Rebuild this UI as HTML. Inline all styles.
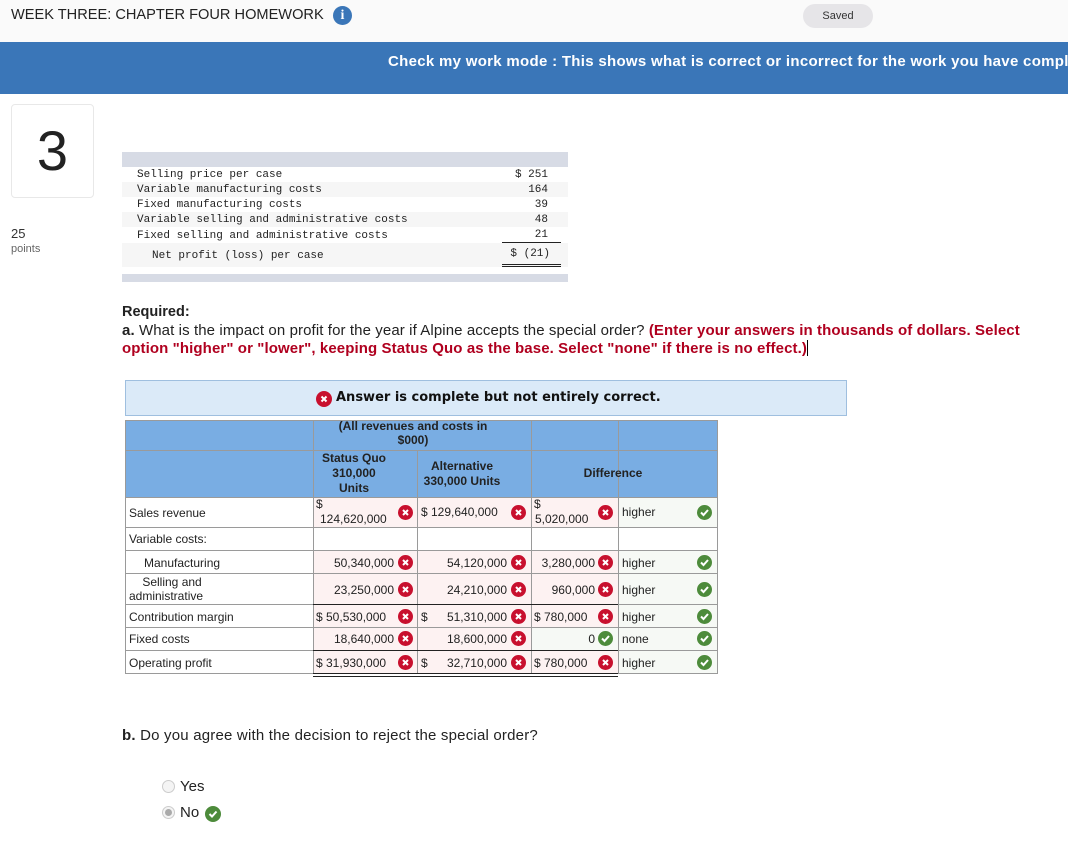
<!DOCTYPE html>
<html><head><meta charset="utf-8"><style>
*{margin:0;padding:0;box-sizing:border-box}
body{width:1068px;height:849px;background:#fff;font-family:"Liberation Sans",Arial,sans-serif;position:relative;overflow:hidden;color:#222}
.a{position:absolute;white-space:nowrap}
.t{position:absolute;font-size:12px;white-space:nowrap;color:#222}
.x,.k{position:absolute;width:15px;height:15px;border-radius:50%;}
.x{background:#c8102e}
.k{background:#4d8b3b}
.x svg,.k svg{position:absolute;left:0;top:0}
.mono{font-family:"Liberation Mono",monospace;font-size:11px;color:#222}
</style></head><body>
<div class="a" style="left:0;top:0;width:1068px;height:42px;background:#fafafa"></div>
<div class="a" style="left:11px;top:7px;font-size:14.6px;color:#222">WEEK THREE: CHAPTER FOUR HOMEWORK</div>
<div class="a" style="left:333px;top:6px;width:19px;height:19px;border-radius:50%;background:#3a76b8;color:#fff;font:bold 14px 'Liberation Serif',serif;text-align:center;line-height:19px">i</div>
<div class="a" style="left:803px;top:4px;width:70px;height:24px;border-radius:12px;background:#e6e5e8;font-size:11px;text-align:center;line-height:24px;color:#333">Saved</div>
<div class="a" style="left:0;top:42px;width:1068px;height:52px;background:#3a76b8;overflow:hidden">
<div class="a" style="left:388px;top:11px;font-size:15px;letter-spacing:0.3px;font-weight:bold;color:#fff">Check my work mode : This shows what is correct or incorrect for the work you have completed so far.</div>
</div>
<div class="a" style="left:11px;top:104px;width:83px;height:94px;border:1px solid #e8e8e8;border-radius:4px;font-size:56px;text-align:center;line-height:92px;color:#222">3</div>
<div class="a" style="left:11px;top:226px;font-size:13px;color:#333">25</div>
<div class="a" style="left:11px;top:243px;font-size:11px;color:#666">points</div>
<div class="a" style="left:122px;top:152px;width:446px;height:15px;background:#d7dbe5"></div>
<div class="a" style="left:122px;top:182px;width:446px;height:15px;background:#f6f6f6"></div>
<div class="a" style="left:122px;top:212px;width:446px;height:15px;background:#f6f6f6"></div>
<div class="a" style="left:122px;top:243px;width:446px;height:24px;background:#f6f6f6"></div>
<div class="a" style="left:122px;top:274px;width:446px;height:8px;background:#d7dbe5"></div>
<div class="a mono" style="left:137px;top:169px">Selling price per case</div>
<div class="a mono" style="left:137px;top:184px">Variable manufacturing costs</div>
<div class="a mono" style="left:137px;top:199px">Fixed manufacturing costs</div>
<div class="a mono" style="left:137px;top:214px">Variable selling and administrative costs</div>
<div class="a mono" style="left:137px;top:230px">Fixed selling and administrative costs</div>
<div class="a mono" style="left:152px;top:250px">Net profit (loss) per case</div>
<div class="a mono" style="left:500px;top:169px;width:48px;text-align:right">$ 251</div>
<div class="a mono" style="left:500px;top:184px;width:48px;text-align:right">164</div>
<div class="a mono" style="left:500px;top:199px;width:48px;text-align:right">39</div>
<div class="a mono" style="left:500px;top:214px;width:48px;text-align:right">48</div>
<div class="a mono" style="left:500px;top:229px;width:48px;text-align:right">21</div>
<div class="a mono" style="left:500px;top:248px;width:50px;text-align:right">$ (21)</div>
<div class="a" style="top:242px;width:59px;height:1px;background:#222;left:502px"></div>
<div class="a" style="left:502px;top:264px;width:59px;height:3px;border-top:1px solid #222;border-bottom:1px solid #222"></div>
<div class="a" style="left:122px;top:304px;font-size:14.5px;font-weight:bold;color:#222">Required:</div>
<div class="a" style="left:122px;top:322px;font-size:15px;letter-spacing:0.1px;line-height:18px;white-space:normal;width:925px"><b>a.</b> What is the impact on profit for the year if Alpine accepts the special order? <b style="color:#b0001f">(Enter your answers in thousands of dollars. Select option "higher" or "lower", keeping Status Quo as the base. Select "none" if there is no effect.)</b><span style="display:inline-block;width:1px;height:16px;background:#000;vertical-align:-3px"></span></div>
<div class="a" style="left:125px;top:380px;width:722px;height:36px;background:#dbeaf8;border:1px solid #9fbfdf"></div>
<div class="x" style="left:316px;top:391px;width:16px;height:16px"><svg width="16" height="16"><path d="M5.5 5.5L10.5 10.5M10.5 5.5L5.5 10.5" stroke="#fff" stroke-width="2"/></svg></div>
<div class="a" style="left:336px;top:390px;font-size:13px;font-weight:bold;font-family:'DejaVu Sans',sans-serif;color:#111">Answer is complete but not entirely correct.</div>
<div class="a" style="left:125px;top:420px;width:593px;height:77px;background:#79ade3"></div>
<div class="a" style="left:313px;top:497px;width:305px;height:30px;background:#fdf2f2"></div>
<div class="a" style="left:313px;top:550px;width:305px;height:123px;background:#fdf2f2"></div>
<div class="a" style="left:531px;top:627px;width:87px;height:23px;background:#f6f9f5"></div>
<div class="a" style="left:618px;top:497px;width:100px;height:30px;background:#f6f9f5"></div>
<div class="a" style="left:618px;top:550px;width:100px;height:123px;background:#f6f9f5"></div>
<svg class="a" style="left:0;top:0" width="1068" height="849">
<g stroke="#9a9a9a" stroke-width="1" fill="none">
<rect x="125.5" y="420.5" width="592" height="253"/>
<line x1="125" y1="450.5" x2="718" y2="450.5"/>
<line x1="125" y1="497.5" x2="718" y2="497.5"/>
<line x1="125" y1="527.5" x2="718" y2="527.5"/>
<line x1="125" y1="550.5" x2="718" y2="550.5"/>
<line x1="125" y1="573.5" x2="718" y2="573.5"/>
<line x1="125" y1="627.5" x2="718" y2="627.5"/>
<line x1="125" y1="650.5" x2="718" y2="650.5"/>
<line x1="313.5" y1="420" x2="313.5" y2="673"/>
<line x1="417.5" y1="450" x2="417.5" y2="673"/>
<line x1="531.5" y1="420" x2="531.5" y2="673"/>
<line x1="618.5" y1="420" x2="618.5" y2="673"/>
<line x1="125" y1="604.5" x2="313" y2="604.5"/>
<line x1="618" y1="604.5" x2="718" y2="604.5"/>
</g>
<g stroke="#222" stroke-width="1">
<line x1="313" y1="604.5" x2="618" y2="604.5"/>
<line x1="313" y1="650.5" x2="618" y2="650.5"/>
<line x1="313" y1="673.5" x2="618" y2="673.5"/>
<line x1="313" y1="676.5" x2="618" y2="676.5"/>
</g>
</svg>
<div class="t" style="left:313px;top:419px;width:200px;text-align:center;font-weight:bold;color:#222;line-height:14px">(All revenues and costs in<br>$000)</div>
<div class="t" style="left:313px;top:451px;width:82px;text-align:center;font-weight:bold;line-height:15px">Status Quo<br>310,000<br>Units</div>
<div class="t" style="left:417px;top:459px;width:90px;text-align:center;font-weight:bold;line-height:15px">Alternative<br>330,000 Units</div>
<div class="t" style="left:531px;top:466px;width:164px;text-align:center;font-weight:bold">Difference</div>
<div class="t" style="left:129px;top:506px">Sales revenue</div>
<div class="t" style="left:129px;top:532px">Variable costs:</div>
<div class="t" style="left:144px;top:556px">Manufacturing</div>
<div class="t" style="left:129px;top:575px;line-height:14px;white-space:normal;width:100px">&nbsp;&nbsp;&nbsp;&nbsp;Selling and administrative</div>
<div class="t" style="left:129px;top:610px">Contribution margin</div>
<div class="t" style="left:129px;top:632px">Fixed costs</div>
<div class="t" style="left:129px;top:656px">Operating profit</div>
<div class="t" style="left:316px;top:497px">$</div>
<div class="t" style="left:320px;top:512px">124,620,000</div>
<div class="t" style="left:421px;top:505px">$ 129,640,000</div>
<div class="t" style="left:534px;top:497px">$</div>
<div class="t" style="left:535px;top:512px">5,020,000</div>
<div class="t" style="left:622px;top:505px">higher</div>
<div class="t" style="left:313px;top:556px;width:81px;text-align:right">50,340,000</div>
<div class="t" style="left:417px;top:556px;width:90px;text-align:right">54,120,000</div>
<div class="t" style="left:531px;top:556px;width:64px;text-align:right">3,280,000</div>
<div class="t" style="left:622px;top:556px">higher</div>
<div class="t" style="left:313px;top:583px;width:81px;text-align:right">23,250,000</div>
<div class="t" style="left:417px;top:583px;width:90px;text-align:right">24,210,000</div>
<div class="t" style="left:531px;top:583px;width:64px;text-align:right">960,000</div>
<div class="t" style="left:622px;top:583px">higher</div>
<div class="t" style="left:316px;top:610px">$ 50,530,000</div>
<div class="t" style="left:421px;top:610px">$</div>
<div class="t" style="left:417px;top:610px;width:90px;text-align:right">51,310,000</div>
<div class="t" style="left:534px;top:610px">$ 780,000</div>
<div class="t" style="left:622px;top:610px">higher</div>
<div class="t" style="left:313px;top:632px;width:81px;text-align:right">18,640,000</div>
<div class="t" style="left:417px;top:632px;width:90px;text-align:right">18,600,000</div>
<div class="t" style="left:531px;top:632px;width:64px;text-align:right">0</div>
<div class="t" style="left:622px;top:632px">none</div>
<div class="t" style="left:316px;top:656px">$ 31,930,000</div>
<div class="t" style="left:421px;top:656px">$</div>
<div class="t" style="left:417px;top:656px;width:90px;text-align:right">32,710,000</div>
<div class="t" style="left:534px;top:656px">$ 780,000</div>
<div class="t" style="left:622px;top:656px">higher</div>
<div class="x" style="left:398px;top:505px"><svg width="15" height="15"><path d="M5 5L10 10M10 5L5 10" stroke="#fff" stroke-width="2"/></svg></div>
<div class="x" style="left:511px;top:505px"><svg width="15" height="15"><path d="M5 5L10 10M10 5L5 10" stroke="#fff" stroke-width="2"/></svg></div>
<div class="x" style="left:598px;top:505px"><svg width="15" height="15"><path d="M5 5L10 10M10 5L5 10" stroke="#fff" stroke-width="2"/></svg></div>
<div class="x" style="left:398px;top:555px"><svg width="15" height="15"><path d="M5 5L10 10M10 5L5 10" stroke="#fff" stroke-width="2"/></svg></div>
<div class="x" style="left:511px;top:555px"><svg width="15" height="15"><path d="M5 5L10 10M10 5L5 10" stroke="#fff" stroke-width="2"/></svg></div>
<div class="x" style="left:598px;top:555px"><svg width="15" height="15"><path d="M5 5L10 10M10 5L5 10" stroke="#fff" stroke-width="2"/></svg></div>
<div class="x" style="left:398px;top:582px"><svg width="15" height="15"><path d="M5 5L10 10M10 5L5 10" stroke="#fff" stroke-width="2"/></svg></div>
<div class="x" style="left:511px;top:582px"><svg width="15" height="15"><path d="M5 5L10 10M10 5L5 10" stroke="#fff" stroke-width="2"/></svg></div>
<div class="x" style="left:598px;top:582px"><svg width="15" height="15"><path d="M5 5L10 10M10 5L5 10" stroke="#fff" stroke-width="2"/></svg></div>
<div class="x" style="left:398px;top:609px"><svg width="15" height="15"><path d="M5 5L10 10M10 5L5 10" stroke="#fff" stroke-width="2"/></svg></div>
<div class="x" style="left:511px;top:609px"><svg width="15" height="15"><path d="M5 5L10 10M10 5L5 10" stroke="#fff" stroke-width="2"/></svg></div>
<div class="x" style="left:598px;top:609px"><svg width="15" height="15"><path d="M5 5L10 10M10 5L5 10" stroke="#fff" stroke-width="2"/></svg></div>
<div class="x" style="left:398px;top:631px"><svg width="15" height="15"><path d="M5 5L10 10M10 5L5 10" stroke="#fff" stroke-width="2"/></svg></div>
<div class="x" style="left:511px;top:631px"><svg width="15" height="15"><path d="M5 5L10 10M10 5L5 10" stroke="#fff" stroke-width="2"/></svg></div>
<div class="k" style="left:598px;top:631px"><svg width="15" height="15"><path d="M4 7.5L6.5 10L11 5" stroke="#fff" stroke-width="2" fill="none"/></svg></div>
<div class="x" style="left:398px;top:655px"><svg width="15" height="15"><path d="M5 5L10 10M10 5L5 10" stroke="#fff" stroke-width="2"/></svg></div>
<div class="x" style="left:511px;top:655px"><svg width="15" height="15"><path d="M5 5L10 10M10 5L5 10" stroke="#fff" stroke-width="2"/></svg></div>
<div class="x" style="left:598px;top:655px"><svg width="15" height="15"><path d="M5 5L10 10M10 5L5 10" stroke="#fff" stroke-width="2"/></svg></div>
<div class="k" style="left:697px;top:505px"><svg width="15" height="15"><path d="M4 7.5L6.5 10L11 5" stroke="#fff" stroke-width="2" fill="none"/></svg></div>
<div class="k" style="left:697px;top:555px"><svg width="15" height="15"><path d="M4 7.5L6.5 10L11 5" stroke="#fff" stroke-width="2" fill="none"/></svg></div>
<div class="k" style="left:697px;top:582px"><svg width="15" height="15"><path d="M4 7.5L6.5 10L11 5" stroke="#fff" stroke-width="2" fill="none"/></svg></div>
<div class="k" style="left:697px;top:609px"><svg width="15" height="15"><path d="M4 7.5L6.5 10L11 5" stroke="#fff" stroke-width="2" fill="none"/></svg></div>
<div class="k" style="left:697px;top:631px"><svg width="15" height="15"><path d="M4 7.5L6.5 10L11 5" stroke="#fff" stroke-width="2" fill="none"/></svg></div>
<div class="k" style="left:697px;top:655px"><svg width="15" height="15"><path d="M4 7.5L6.5 10L11 5" stroke="#fff" stroke-width="2" fill="none"/></svg></div>
<div class="a" style="left:122px;top:727px;font-size:15px;letter-spacing:0.2px;color:#222"><b>b.</b> Do you agree with the decision to reject the special order?</div>
<div class="a" style="left:162px;top:780px;width:13px;height:13px;border-radius:50%;border:1px solid #ccc;background:#f4f4f4"></div>
<div class="a" style="left:180px;top:778px;font-size:15px">Yes</div>
<div class="a" style="left:162px;top:806px;width:13px;height:13px;border-radius:50%;border:1px solid #ccc;background:#f4f4f4"></div>
<div class="a" style="left:165px;top:809px;width:7px;height:7px;border-radius:50%;background:#aaa"></div>
<div class="a" style="left:180px;top:804px;font-size:15px">No</div>
<div class="k" style="left:205px;top:806px;width:16px;height:16px"><svg width="16" height="16"><path d="M4.5 8L7 10.5L11.5 5.5" stroke="#fff" stroke-width="2" fill="none"/></svg></div>
</body></html>
